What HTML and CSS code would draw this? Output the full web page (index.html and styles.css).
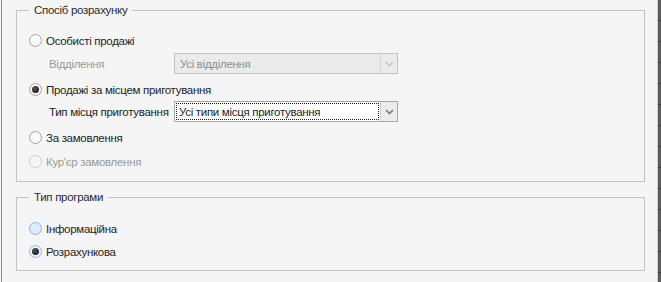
FILE: index.html
```html
<!DOCTYPE html>
<html lang="uk">
<head>
  <meta charset="UTF-8">
  <title>Налаштування розрахунку</title>
  <link rel="stylesheet" href="styles.css">
</head>
<body>
  <div class="window">
    <div class="content">
      <fieldset class="group group-calc">
        <legend>Спосіб розрахунку</legend>
        <div class="row radio-row r1"><span class="radio"></span><span>Особисті продажі</span></div>
        <div class="row field-row f1">
          <span class="label disabled">Відділення</span>
          <div class="combo combo-disabled">
            <span class="combo-text">Усі відділення</span>
            <span class="combo-btn"><svg width="9" height="6" viewBox="0 0 9 6"><polyline points="1,1 4.5,4.5 8,1" fill="none" stroke="#c4c4c4" stroke-width="1.6"/></svg></span>
          </div>
        </div>
        <div class="row radio-row r2"><span class="radio checked"></span><span>Продажі за місцем приготування</span></div>
        <div class="row field-row f2">
          <span class="label">Тип місця приготування</span>
          <div class="combo">
            <span class="combo-text focus">Усі типи місця приготування</span>
            <span class="combo-btn"><svg width="9" height="6" viewBox="0 0 9 6"><polyline points="1,1 4.5,4.5 8,1" fill="none" stroke="#7a7a7a" stroke-width="1.6"/></svg></span>
          </div>
        </div>
        <div class="row radio-row r3"><span class="radio"></span><span>За замовлення</span></div>
        <div class="row radio-row r4 disabled"><span class="radio radio-disabled"></span><span>Кур'єр замовлення</span></div>
      </fieldset>

      <fieldset class="group group-type">
        <legend>Тип програми</legend>
        <div class="row radio-row r5"><span class="radio hover"></span><span>Інформаційна</span></div>
        <div class="row radio-row r6"><span class="radio checked focused"></span><span>Розрахункова</span></div>
      </fieldset>
    </div>
    <div class="edge"></div>
  </div>
</body>
</html>
```

FILE: styles.css
```css
html, body {
  margin: 0;
  height: 100%;
}
body {
  background: #f5f5f5;
  font-family: "Liberation Sans", Arial, sans-serif;
  font-size: 11.5px;
  letter-spacing: -0.3px;
  color: #1e1e1e;
  overflow: hidden;
  white-space: nowrap;
}
.window {
  display: flex;
  height: 282px;
}
.content {
  flex: 1;
  margin-left: 1px;
  border-left: 1px solid #8e8e8e;
  padding: 3px 12px 0 14px;
}
.edge {
  width: 3px;
  border-left: 1px solid #d0d0d0;
  background: repeating-linear-gradient(to bottom, #5c5c5c 0, #5c5c5c 20px, #3a3a3a 20px, #3a3a3a 21px);
}

.group {
  margin: 0;
  border: 1px solid #c3c3c3;
  padding: 0 12px 9px 12px;
  min-width: 0;
}
.group legend {
  padding: 0 5px;
  margin-left: 0;
  color: #2a2a2a;
  line-height: 14px;
}
.group-type {
  margin-top: 8px;
  padding-bottom: 8px;
}

.row {
  display: flex;
  align-items: center;
  height: 21px;
}
.radio-row {
  gap: 4px;
}
.r1 { margin-top: 13px; }
.f1 { margin-top: 2px; }
.r2 { margin-top: 5px; }
.f2 { margin-top: 1px; }
.r3 { margin-top: 5px; }
.r4 { margin-top: 3px; }
.r5 { margin-top: 14px; }
.r6 { margin-top: 2px; }

.disabled { color: #9a9a9a; }

.radio {
  box-sizing: border-box;
  width: 13px;
  height: 13px;
  border-radius: 50%;
  border: 1px solid #a4a4a4;
  background: radial-gradient(circle at 50% 35%, #ffffff 0, #f6f6f6 70%, #ebebeb 100%);
  display: flex;
  align-items: center;
  justify-content: center;
  flex: none;
}
.radio.checked::after {
  content: "";
  width: 7px;
  height: 7px;
  border-radius: 50%;
  background: radial-gradient(circle at 40% 35%, #555 0, #1c1c1c 80%);
}
.radio.hover {
  border-color: #8cb6e2;
  background: #dcecfc;
}
.radio.focused {
  border-color: #8fb8e3;
  background: #eef5fd;
}
.radio-disabled {
  border-color: #cdcdcd;
  background: #f5f5f5;
}

.field-row .label {
  width: 125px;
  margin-left: 20px;
  flex: none;
}
.combo {
  box-sizing: border-box;
  display: flex;
  width: 224px;
  height: 21px;
  border: 1px solid #a8a8a8;
  background: #fff;
}
.combo-disabled {
  border-color: #c2c2c2;
  background: #ebebeb;
  color: #8f8f8f;
}
.combo-text {
  flex: 1;
  display: flex;
  align-items: center;
  padding-left: 4px;
  margin: 1px;
}
.combo-text.focus {
  outline: 1px dotted #222;
  outline-offset: -1px;
  padding-left: 3px;
}
.combo-btn {
  width: 16px;
  border-left: 1px solid #c8c8c8;
  background: #ececec;
  display: flex;
  align-items: center;
  justify-content: center;
}
.combo-disabled .combo-btn {
  background: #ebebeb;
  border-left-color: #d4d4d4;
}
```
